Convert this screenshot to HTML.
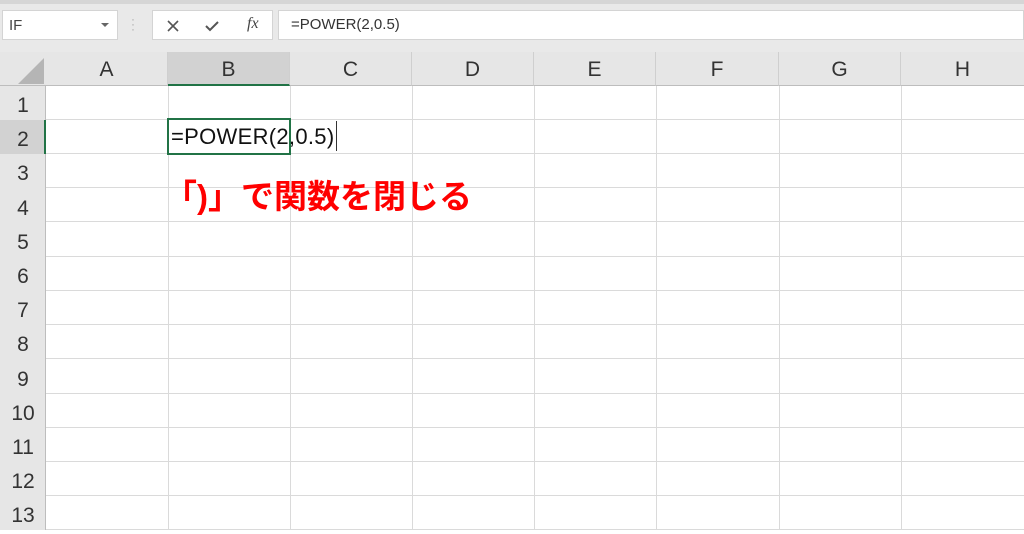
<!DOCTYPE html>
<html><head><meta charset="utf-8"><style>
*{margin:0;padding:0;box-sizing:border-box}
body{width:1024px;height:530px;overflow:hidden;background:#fff;font-family:"Liberation Sans","Noto Sans CJK JP",sans-serif;position:relative}
.a{position:absolute}
.top{left:0;top:0;width:1024px;height:52px;background:#e9e9e9;border-top:4px solid #d6d6d6}
.box{background:#fff;border:1px solid #d4d4d4}
.hdr{top:52px;height:34px;background:#e6e6e6;border-bottom:1px solid #bdbdbd;font-size:21px;color:#333;text-align:center;line-height:36px}
.rh{left:0;width:46px;background:#e6e6e6;border-right:1px solid #bdbdbd;font-size:21px;color:#333;text-align:center}
.hl{height:1px;left:46px;width:978px;background:#dadada}
.vl{width:1px;top:86px;height:444px;background:#dadada}
.ch{border-right:1px solid #cfcfcf}
</style></head><body>
<div class="a top"></div>
<div class="a box" style="left:2px;top:10px;width:116px;height:30px;font-size:15px;color:#444;padding:6px 0 0 6px">IF<span class="a" style="left:98px;top:12px;width:0;height:0;border-left:4px solid transparent;border-right:4px solid transparent;border-top:4px solid #666"></span></div>
<div class="a" style="left:131px;top:17px;color:#aaa;font-size:12px;line-height:5px">·<br>·<br>·</div>
<div class="a box" style="left:152px;top:10px;width:121px;height:30px;color:#444">
<svg class="a" style="left:13px;top:8px" width="14" height="14"><path d="M2 2L12 12M12 2L2 12" stroke="#555" stroke-width="1.6"/></svg>
<svg class="a" style="left:51px;top:8px" width="16" height="14"><path d="M2 7L6 11L14 3" stroke="#555" stroke-width="2" fill="none"/></svg>
<span class="a" style="left:94px;top:4px;font-family:'Liberation Serif',serif;font-style:italic;font-size:16px">fx</span></div>
<div class="a box" style="left:278px;top:10px;width:746px;height:30px;font-size:15px;color:#333;padding:5px 0 0 12px">=POWER(2,0.5)</div>

<div class="a hdr" style="left:0;width:46px"><svg width="46" height="34"><path d="M44 6L44 32L18 32Z" fill="#b5b5b5"/></svg></div>
<div class="a hdr ch" style="left:46px;width:122px">A</div>
<div class="a hdr ch" style="left:168px;width:122px;background:#d2d2d2;border-bottom:2px solid #217346">B</div>
<div class="a hdr ch" style="left:290px;width:122px">C</div>
<div class="a hdr ch" style="left:412px;width:122px">D</div>
<div class="a hdr ch" style="left:534px;width:122px">E</div>
<div class="a hdr ch" style="left:656px;width:123px">F</div>
<div class="a hdr ch" style="left:779px;width:122px">G</div>
<div class="a hdr" style="left:901px;width:123px">H</div>

<div class="a rh" style="top:86px;height:444px"></div>
<div class="a" style="left:0;top:120px;width:46px;height:34px;background:#d2d2d2;border-right:2px solid #217346"></div>
<div class="a" style="left:0;top:89px;width:46px;font-size:21px;color:#333;text-align:center;line-height:34.2px">1<br>2<br>3<br>4<br>5<br>6<br>7<br>8<br>9<br>10<br>11<br>12<br>13</div>
<div class="a hl" style="top:119px"></div><div class="a hl" style="top:153px"></div><div class="a hl" style="top:187px"></div><div class="a hl" style="top:221px"></div><div class="a hl" style="top:256px"></div><div class="a hl" style="top:290px"></div><div class="a hl" style="top:324px"></div><div class="a hl" style="top:358px"></div><div class="a hl" style="top:393px"></div><div class="a hl" style="top:427px"></div><div class="a hl" style="top:461px"></div><div class="a hl" style="top:495px"></div><div class="a hl" style="top:529px"></div>
<div class="a vl" style="left:168px"></div><div class="a vl" style="left:290px"></div><div class="a vl" style="left:412px"></div><div class="a vl" style="left:534px"></div><div class="a vl" style="left:656px"></div><div class="a vl" style="left:779px"></div><div class="a vl" style="left:901px"></div>

<div class="a" style="left:167px;top:118px;width:124px;height:37px;border:2px solid #217346;background:#fff"></div>
<div class="a" style="left:171px;top:124px;font-size:22px;color:#111;white-space:nowrap;letter-spacing:0.3px">=POWER(2,0.5)</div>
<div class="a" style="left:336px;top:121px;width:1px;height:30px;background:#333"></div>
<div class="a" style="left:164px;top:170px;font-size:33px;font-weight:bold;color:#f00;white-space:nowrap">「)」で関数を閉じる</div>
</body></html>
